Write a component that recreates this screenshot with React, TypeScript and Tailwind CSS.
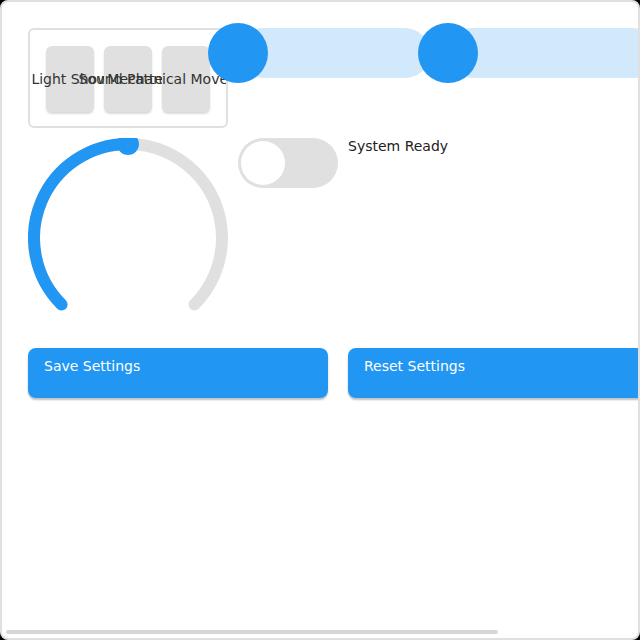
import React from 'react'

const font = { fontFamily: '"DejaVu Sans", "Noto Sans", sans-serif' }

function Key({ label }: { label: string }) {
  return (
    <div className="relative flex h-[66px] w-[48px] shrink-0 items-center justify-center rounded-[6px] bg-[#e0e0e0] shadow-[0_2px_2px_rgba(0,0,0,0.15)]">
      <span className="whitespace-nowrap text-[14px] leading-[16px] text-[#333]">{label}</span>
    </div>
  )
}

function Slider({ className }: { className?: string }) {
  return (
    <div className={`relative h-[50px] shrink-0 rounded-full bg-[#d2e8fb] ${className ?? ''}`}>
      <div className="absolute left-[-30px] top-[-5px] h-[60px] w-[60px] rounded-full bg-[#2196f3]" />
    </div>
  )
}

function Knob() {
  return (
    <svg width="200" height="200" viewBox="0 0 200 200" className="shrink-0">
      <path
        d="M 33.53 166.47 A 94 94 0 1 1 166.47 166.47"
        fill="none"
        stroke="#e0e0e0"
        strokeWidth="12"
        strokeLinecap="round"
      />
      <path
        d="M 33.53 166.47 A 94 94 0 0 1 100 6"
        fill="none"
        stroke="#2196f3"
        strokeWidth="12"
        strokeLinecap="round"
      />
      <circle cx="100" cy="6" r="11" fill="#2196f3" />
    </svg>
  )
}

export default function App() {
  return (
    <div className="h-[640px] w-[640px] bg-black" style={font}>
      <div className="relative h-[640px] w-[640px] overflow-hidden rounded-[8px] border-2 border-[#e0e0e0] bg-white">
        <div className="w-[700px] p-[26px]">
          <div className="flex items-start">
            <div className="flex h-[100px] w-[200px] shrink-0 gap-[10px] overflow-hidden rounded-[6px] border-2 border-[#e0e0e0] p-[16px]">
              <Key label="Light Show" />
              <Key label="Sound Pattern" />
              <Key label="Mechanical Movement" />
            </div>
            <Slider className="ml-[10px] w-[192px]" />
            <Slider className="ml-[18px] w-[210px]" />
          </div>
          <div className="mt-[10px] flex items-start gap-[10px]">
            <Knob />
            <div className="flex h-[50px] w-[100px] shrink-0 items-center rounded-full bg-[#e0e0e0] px-[3px]">
              <div className="h-[44px] w-[44px] rounded-full bg-white" />
            </div>
            <span className="text-[14px] leading-[16px] text-[#222]">System Ready</span>
          </div>
          <div className="mt-[10px] flex gap-[20px]">
            <button className="flex h-[50px] w-[300px] shrink-0 items-start rounded-[8px] bg-[#2196f3] px-[16px] pt-[10px] text-left text-[14px] leading-[16px] text-white shadow-[0_2px_2px_rgba(0,0,0,0.25)]">
              Save Settings
            </button>
            <button className="flex h-[50px] w-[300px] shrink-0 items-start rounded-[8px] bg-[#2196f3] px-[16px] pt-[10px] text-left text-[14px] leading-[16px] text-white shadow-[0_2px_2px_rgba(0,0,0,0.25)]">
              Reset Settings
            </button>
          </div>
        </div>
        <div className="absolute bottom-[4px] left-[4px] h-[4px] w-[492px] rounded-full bg-[#d6d6d6]" />
      </div>
    </div>
  )
}
